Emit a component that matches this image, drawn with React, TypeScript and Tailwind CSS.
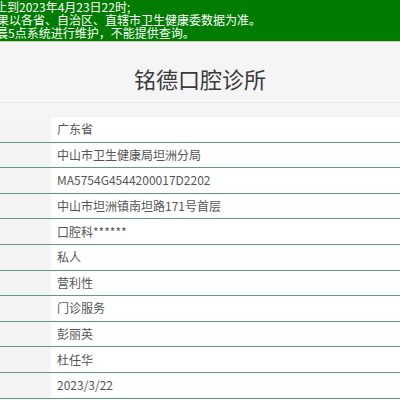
const rows = [
  "广东省",
  "中山市卫生健康局坦洲分局",
  "MA5754G4544200017D2202",
  "中山市坦洲镇南坦路171号首层",
  "口腔科******",
  "私人",
  "营利性",
  "门诊服务",
  "彭丽英",
  "杜任华",
  "2023/3/22",
  "",
]

export default function App() {
  return (
    <div
      className="w-[400px] h-[400px] overflow-hidden bg-[#f5f5f5]"
      style={{ fontFamily: '"Microsoft YaHei", "Noto Sans CJK SC", sans-serif' }}
    >
      <div className="h-[42px] bg-[#007d00] border-b border-[#d2cab4] overflow-hidden text-[12px] leading-[13px] text-white pt-[0px]">
        <div className="ml-[-41px] h-[13px] whitespace-nowrap">数据截止到2023年4月23日22时;</div>
        <div className="ml-[-39px] h-[13px] whitespace-nowrap">查询结果以各省、自治区、直辖市卫生健康委数据为准。</div>
        <div className="ml-[-40px] h-[13px] whitespace-nowrap">每天凌晨5点系统进行维护，不能提供查询。</div>
      </div>

      <div className="h-[61px] flex items-center justify-center border-b border-[#e6e6e6]">
        <h1 className="text-[22px] text-[#3a3a3a] pt-[12px]">铭德口腔诊所</h1>
      </div>

      <div className="mt-[14px]">
        {rows.map((r, i) => (
          <div key={i} className="flex h-[25.6px] border-b border-[#5f9c7e]">
            <div className="w-[51px] bg-[#f4f4f4]" />
            <div className="flex-1 bg-white flex items-center pl-[6px] text-[12px] text-[#555]">
              {r}
            </div>
          </div>
        ))}
      </div>
    </div>
  )
}
